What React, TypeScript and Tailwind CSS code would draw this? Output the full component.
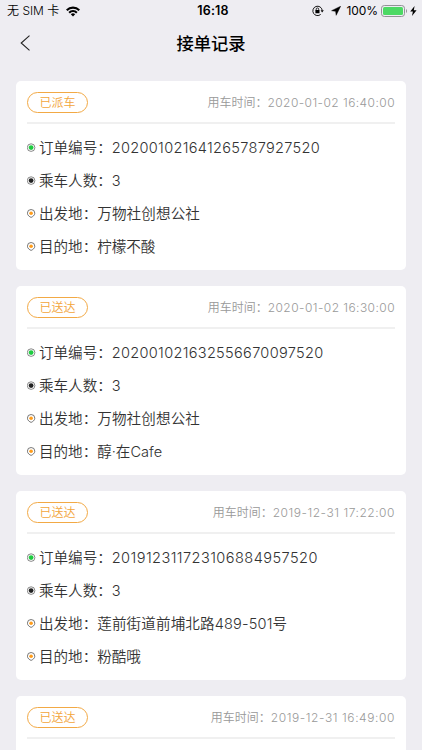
import React from 'react';

interface Order {
  status: string;
  time: string;
  timeClass: string;
  details?: {
    orderNo: string;
    orderNoClass: string;
    people: string;
    from: string;
    to: string;
  };
}

const orders: Order[] = [
  {
    status: '已派车',
    time: '2020-01-02 16:40:00',
    timeClass: 'tracking-[0.44px]',
    details: {
      orderNo: '202001021641265787927520',
      orderNoClass: 'tracking-[0.31px]',
      people: '3',
      from: '万物社创想公社',
      to: '柠檬不酸',
    },
  },
  {
    status: '已送达',
    time: '2020-01-02 16:30:00',
    timeClass: 'tracking-[0.44px]',
    details: {
      orderNo: '202001021632556670097520',
      orderNoClass: 'tracking-[0.31px]',
      people: '3',
      from: '万物社创想公社',
      to: '醇·在Cafe',
    },
  },
  {
    status: '已送达',
    time: '2019-12-31 17:22:00',
    timeClass: 'tracking-[0.53px]',
    details: {
      orderNo: '201912311723106884957520',
      orderNoClass: 'tracking-[0.44px]',
      people: '3',
      from: '莲前街道前埔北路489-501号',
      to: '粉酷哦',
    },
  },
  {
    status: '已送达',
    time: '2019-12-31 16:49:00',
    timeClass: 'tracking-[0.58px]',
  },
];

const DotIcon: React.FC<{ color: string }> = ({ color }) => (
  <svg width="9" height="9" viewBox="0 0 9 9" fill="none" className="shrink-0">
    <circle cx="4.1" cy="4.6" r="3.8" stroke="#555" strokeWidth="0.7" />
    <circle cx="4.1" cy="4.6" r="2.4" fill={color} />
  </svg>
);

const PinIcon: React.FC = () => (
  <svg width="9" height="9" viewBox="0 0 9 9" fill="none" className="shrink-0">
    <path
      d="M4.1 8.4C2.6 7.8.4 6.4.4 4.2a3.7 3.7 0 0 1 7.4 0C7.8 6.4 5.6 7.8 4.1 8.4Z"
      stroke="#555"
      strokeWidth="0.8"
    />
    <circle cx="4.1" cy="4.2" r="1.8" fill="#ff9d1c" />
  </svg>
);

const StatusBar: React.FC = () => (
  <div className="flex h-[22px] items-center text-[12px] text-black">
    <div className="flex flex-1 items-center pl-[7px]">
      <span className="whitespace-nowrap font-[350]">无 SIM 卡</span>
      <svg width="14" height="11" viewBox="0 0 14 11" className="ml-[7px]">
        <path d="M0 3.4a10 10 0 0 1 14 0L12.5 5a7.9 7.9 0 0 0-11 0Z" />
        <path d="M2.4 5.9a6.6 6.6 0 0 1 9.2 0L10.1 7.4a4.5 4.5 0 0 0-6.2 0Z" />
        <path d="M4.8 8.3a3.1 3.1 0 0 1 4.4 0L7 10.5Z" />
      </svg>
    </div>
    <span className="ml-[2px] text-[12.5px] font-semibold tracking-[0.15px]">16:18</span>
    <div className="flex flex-1 items-center justify-end pr-[5px]">
      <svg width="12" height="12" viewBox="0 0 12 12" fill="none">
        <path d="M10.2 5.2A4.7 4.7 0 1 0 8.7 9.4" stroke="#000" strokeWidth="0.9" />
        <path d="M8.6 5.3h3.2L10.1 7.5Z" fill="#000" />
        <rect x="3.4" y="5.1" width="4.1" height="3.2" rx="0.4" fill="#000" />
        <path d="M4.2 5.4V4.2a1.25 1.25 0 0 1 2.5 0v1.2" stroke="#000" strokeWidth="0.8" />
      </svg>
      <svg width="10" height="10" viewBox="0 0 10 10" className="ml-[7px]">
        <path d="M9.6.3.6 4.7l4 .6.6 4Z" stroke="#000" strokeWidth="0.5" strokeLinejoin="round" />
      </svg>
      <span className="ml-[5px] tracking-[-0.05px]">100%</span>
      <svg width="27" height="12" viewBox="0 0 27 12" className="ml-[3px]">
        <rect x="0.5" y="0.5" width="23" height="11" rx="2.8" fill="none" stroke="#929296" />
        <rect x="2" y="2" width="20" height="8" rx="1.5" fill="#4cd964" />
        <path d="M25 4v4c1.4-.5 1.4-3.5 0-4Z" fill="#929296" />
      </svg>
      <svg width="7" height="10" viewBox="0 0 7 10" className="ml-[2px]">
        <path d="M4.6 0 .2 5.6h2.7L2 10l4.6-5.8H3.8Z" />
      </svg>
    </div>
  </div>
);

const NavBar: React.FC = () => (
  <div className="grid h-[43px] grid-cols-3 items-center">
    <svg width="10" height="16" viewBox="0 0 10 16" fill="none" className="mb-px ml-[20px]">
      <path d="M9.5.7 1.2 8l8.3 7.3" stroke="#222" strokeWidth="1.1" />
    </svg>
    <h1 className="text-center text-[17.3px] font-medium text-black">接单记录</h1>
  </div>
);

const Row: React.FC<{ icon: React.ReactNode; label: string; value: string; valueClass?: string }> = ({
  icon,
  label,
  value,
  valueClass,
}) => (
  <div className="flex h-[33px] items-center whitespace-nowrap text-[14.55px] font-[350] text-[#333]">
    {icon}
    <div className="ml-[3px] flex pt-[2px]">
      <span>{label}：</span>
      <span className={valueClass}>{value}</span>
    </div>
  </div>
);

const OrderCard: React.FC<{ order: Order }> = ({ order }) => {
  const { status, time, timeClass, details } = order;

  return (
    <div className="h-[189px] shrink-0 rounded-[5px] bg-white px-[11px] pt-[11px]">
      <div className="flex h-[32px] items-start justify-between border-b-2 border-[#f0f0f0]">
        <span className="flex h-[21px] w-[61px] items-center justify-center rounded-full border border-[#f2a945] text-[12px] font-[350] text-[#f2a53a]">
          {status}
        </span>
        <div className="flex h-[21px] items-center whitespace-nowrap text-[12px] font-[350] text-[#999]">
          <span>用车时间：</span>
          <span className={timeClass}>{time}</span>
        </div>
      </div>
      {details && (
        <div className="pt-[7px]">
          <Row
            icon={<DotIcon color="#1fcb40" />}
            label="订单编号"
            value={details.orderNo}
            valueClass={details.orderNoClass}
          />
          <Row icon={<DotIcon color="#222" />} label="乘车人数" value={details.people} />
          <Row icon={<PinIcon />} label="出发地" value={details.from} valueClass="tracking-[0.15px]" />
          <Row icon={<PinIcon />} label="目的地" value={details.to} />
        </div>
      )}
    </div>
  );
};

const App: React.FC = () => {
  return (
    <div className="h-[750px] w-full overflow-hidden bg-[#eeedf2] font-[Inter,'Noto_Sans_CJK_SC',sans-serif]">
      <StatusBar />
      <NavBar />
      <div className="flex flex-col gap-4 px-4 pt-4">
        {orders.map((order) => (
          <OrderCard key={order.time} order={order} />
        ))}
      </div>
    </div>
  );
};

export default App;
